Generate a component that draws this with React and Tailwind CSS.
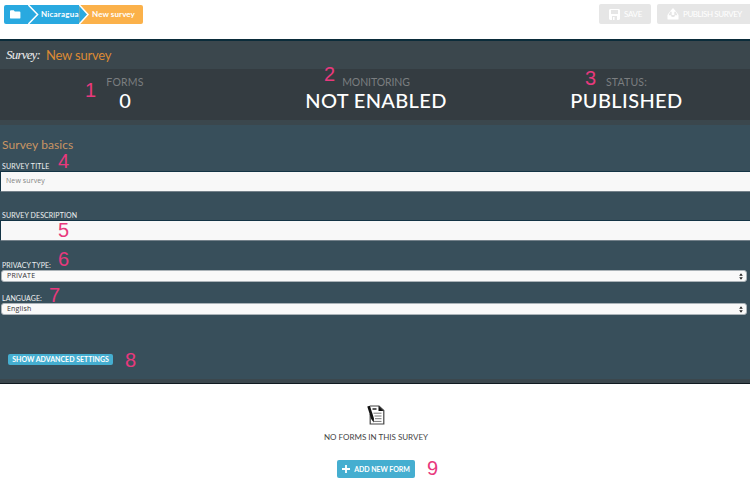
import React from "react";

const markers = [
  ["1", "left-[85px] top-[80px]"],
  ["2", "left-[324px] top-[64px]"],
  ["3", "left-[585px] top-[68px]"],
  ["4", "left-[58px] top-[151px]"],
  ["5", "left-[58px] top-[220px]"],
  ["6", "left-[58px] top-[249px]"],
  ["7", "left-[49px] top-[285px]"],
  ["8", "left-[125px] top-[350px]"],
  ["9", "left-[427px] top-[458px]"],
];

function Breadcrumbs() {
  return (
    <nav className="flex h-[19px] w-[139px] overflow-hidden rounded-[2px] text-[8px] font-bold leading-[19px] text-white">
      <div className="flex w-[23px] items-center justify-center bg-[#29a9e0]">
        <svg width="11" height="9" viewBox="0 0 11 9" fill="#fff">
          <path d="M0 1.2Q0 .3 1 .3h2.8l1 1.2h4.6q1 0 1 1v5.2q0 .9-1 .9H1q-1 0-1-.9z" />
        </svg>
      </div>
      <div className="flex w-[52px] bg-[#29a9e0]">
        <svg width="13" height="19" viewBox="0 0 13 19" className="shrink-0">
          <path d="M1.4 0L10.6 9.5 1.4 19" fill="#29a9e0" stroke="#fff" strokeWidth="1.5" />
        </svg>
        <span className="ml-[1px] whitespace-nowrap tracking-[0.2px]">Nicaragua</span>
      </div>
      <div className="flex w-[64px] bg-[#fbb14a]">
        <svg width="13" height="19" viewBox="0 0 13 19" className="shrink-0">
          <path d="M.3 0L9 9.5 .3 19" fill="#29a9e0" stroke="#fff" strokeWidth="1.5" />
        </svg>
        <span className="whitespace-nowrap tracking-[0.1px]">New survey</span>
      </div>
    </nav>
  );
}

function SaveIcon() {
  return (
    <svg width="11" height="11" viewBox="0 0 11 11">
      <path d="M1 0h9l1 1v9l-1 1H1l-1-1V1z" fill="#fff" />
      <path d="M2 1h7v4H2zM3 7h5v4H3z" fill="#e6e6e6" />
      <path d="M4 8h1.5v3H4z" fill="#fff" />
    </svg>
  );
}

function PublishIcon() {
  return (
    <svg width="12" height="12" viewBox="0 0 12 12" fill="#fff" className="shrink-0">
      <path d="M6 0l3.3 3.8H7.3V7H4.7V3.8H2.7z" />
      <path d="M2.5 4L.5 7v4q0 .6.6.6h9.8q.6 0 .6-.6V7l-2-3H8.9l1.5 3.2H8L7.3 9H4.7L4 7.2H1.6L3.1 4z" />
    </svg>
  );
}

function Stat({ label, value, className, labelClass, valueClass }) {
  return (
    <div className={"flex shrink-0 flex-col items-center whitespace-nowrap " + className}>
      <div className={"mt-[7px] h-[13px] text-[10.5px] leading-[13px] text-[#7b7e80] " + labelClass}>{label}</div>
      <div className={"h-[22px] text-[20px] font-medium leading-[22px] text-white " + valueClass}>{value}</div>
    </div>
  );
}

function Label({ children, className }) {
  return (
    <label className={"block h-[10px] w-max whitespace-nowrap pl-[2px] text-[7px] leading-[10px] text-[#eef1f2] " + className}>
      {children}
    </label>
  );
}

function Field({ children }) {
  return (
    <div className="flex h-[21px] items-center border-y border-l border-t-[#143445] border-b-[#74818a] border-l-[#143445] bg-[#f8f8f8] pl-[5px] font-['Open_Sans'] text-[7px] tracking-[0.1px] text-[#858585]">
      {children}
    </div>
  );
}

function Select({ children }) {
  return (
    <div className="mr-[3px] ml-px flex h-[12px] items-center justify-between rounded-[3px] border border-[#abb3b8] bg-[#f9f9f9] pr-[3px] pl-[5px] font-['Open_Sans'] text-[7px] leading-[10px] tracking-[0.2px] text-[#333]">
      {children}
      <svg width="4" height="7" viewBox="0 0 4 7" fill="#222">
        <path d="M2 .3L3.8 2.7H.2zM2 6.7L3.8 4.3H.2z" />
      </svg>
    </div>
  );
}

function FormIcon() {
  return (
    <svg width="18" height="20" viewBox="0 0 18 20" fill="none">
      <path d="M3 1h9l4.8 4.5V19H3.2V9" stroke="#444" strokeWidth="1.2" />
      <path d="M11.5 1v5h5z" fill="#111" />
      <path d="M.3 1.5l2.6-.8L7 13.5l-.3 4.1L4.2 14z" fill="#111" />
      <path d="M5.5 4h4" stroke="#111" strokeWidth="1.4" />
      <path d="M6.5 8.2h8M7.5 11h7M8 13.7h6.5M7 16.4h7.5" stroke="#777" strokeWidth="1" />
    </svg>
  );
}

export default function App() {
  return (
    <main className="relative h-[480px] w-[750px] overflow-hidden bg-white font-['Lato',sans-serif]">
      <header className="flex h-[39px] justify-between pt-[4px] pl-[4px]">
        <div className="pt-px"><Breadcrumbs /></div>
        <div className="flex h-[20px] gap-[6px] whitespace-nowrap text-[8px] text-white">
          <button className="flex w-[52px] items-center gap-[4px] rounded-[2px] bg-[#e6e6e6] pl-[10px]">
            <SaveIcon /><span className="tracking-[-0.3px]">SAVE</span>
          </button>
          <button className="flex w-[93px] items-center gap-[4px] rounded-l-[2px] bg-[#e6e6e6] pl-[10px]">
            <PublishIcon /><span className="tracking-[-0.42px]">PUBLISH SURVEY</span>
          </button>
        </div>
      </header>

      <div className="flex h-[30px] items-center border-t-2 border-[#0b2c3a] bg-[#3b474d] pl-[6px]">
        <span className="w-[40px] font-['Liberation_Serif',serif] text-[13px] italic leading-[20px] tracking-[-0.8px] text-[#eeeeee]">Survey:</span>
        <h1 className="text-[13px] leading-[20px] tracking-[-0.2px] text-[#dc8a34]">New survey</h1>
      </div>

      <section className="flex h-[56px] border-b-[5px] border-[#3b474d] bg-[#343c41]">
        <Stat label="FORMS" value="0" className="w-[250px]" labelClass="tracking-[0.2px]" valueClass="" />
        <Stat label="MONITORING" value="NOT ENABLED" className="w-[252px]" labelClass="tracking-[-0.1px]" valueClass="tracking-[0.35px]" />
        <Stat label="STATUS:" value="PUBLISHED" className="w-[249px]" labelClass="tracking-[0.2px]" valueClass="tracking-[0.4px]" />
      </section>

      <section className="h-[254px] bg-[#384f5b] pt-[12px]">
        <h2 className="h-[24px] pl-[2px] text-[12px] leading-[16px] tracking-[0.08px] text-[#c99563]">Survey basics</h2>
        <Label className="tracking-[0.17px]">SURVEY TITLE</Label>
        <Field>New survey</Field>
        <div className="h-[18px]" />
        <Label className="tracking-[0.1px]">SURVEY DESCRIPTION</Label>
        <Field />
        <div className="h-[19px]" />
        <Label className="tracking-[0.03px]">PRIVACY TYPE:</Label>
        <Select>PRIVATE</Select>
        <div className="h-[11px]" />
        <Label className="tracking-[0.05px]">LANGUAGE:</Label>
        <Select>English</Select>
        <button className="mt-[39px] ml-[8px] flex h-[11px] w-[105px] items-center justify-center whitespace-nowrap rounded-[2px] bg-[#45aed0] text-[7px] font-bold leading-[11px] text-white">
          SHOW ADVANCED SETTINGS
        </button>
      </section>
      <div className="h-[5px] border-b border-[#101a20] bg-[#3b474d]" />

      <section className="flex flex-col items-center pr-[2px] pl-[4px]">
        <div className="mt-[21px] h-[20px]"><FormIcon /></div>
        <p className="mt-[7px] whitespace-nowrap text-[8px] leading-[10px] text-[#444]">NO FORMS IN THIS SURVEY</p>
        <button className="mt-[18px] flex h-[18px] w-[78px] items-center justify-center gap-[4px] whitespace-nowrap rounded-[2px] bg-[#45aed0] text-[7px] font-bold tracking-[-0.05px] text-white">
          <svg width="8" height="8" viewBox="0 0 8 8"><path d="M4 0v8M0 4h8" stroke="#fff" strokeWidth="1.8" /></svg>
          ADD NEW FORM
        </button>
      </section>

      {markers.map(([n, position]) => (
        <span key={n} className={"absolute font-['Liberation_Sans',sans-serif] text-[20px] leading-[20px] text-[#e8397d] " + position}>{n}</span>
      ))}
    </main>
  );
}
